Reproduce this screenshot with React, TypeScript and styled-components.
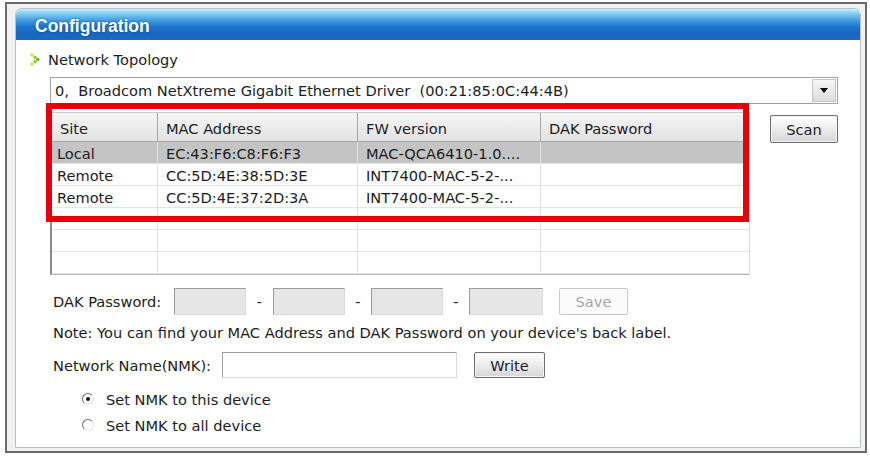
import React from "react";
import styled, { createGlobalStyle } from "styled-components";

const FONT = `"DejaVu Sans", Verdana, sans-serif`;

const Global = createGlobalStyle`
  html, body { margin: 0; padding: 0; background: #ffffff; }
  body { font-family: ${FONT}; font-size: 14.6px; color: #1c1c1c; }
  #root { width: 870px; height: 456px; overflow: hidden; }
`;

const Window = styled.div`
  box-sizing: border-box;
  margin: 2px 0 0 5px;
  width: 862px;
  height: 451px;
  border: 2px solid #6a6a6a;
  padding: 4px 4px 3px 8px;
  background: #f1f1f1;
`;

const Panel = styled.div`
  box-sizing: border-box;
  height: 100%;
  border: 1px solid #b8c0c8;
  border-radius: 7px 7px 0 0;
  background: #ffffff;
  display: flex;
  flex-direction: column;
  overflow: hidden;
`;

const TitleBar = styled.div`
  flex: none;
  height: 31px;
  box-sizing: border-box;
  padding: 3px 0 0 19px;
  display: flex;
  align-items: center;
  background: linear-gradient(
    to bottom,
    #c4ebfa 0%,
    #86d0f1 14%,
    #4aa3e3 34%,
    #1f78cf 55%,
    #1765bd 80%,
    #1c6bc3 100%
  );
  color: #ffffff;
  font: bold 17.5px "Liberation Sans", Arial, sans-serif;
  text-shadow: 0 0 2px rgba(10, 50, 110, 0.7);
`;

const Body = styled.div`
  flex: 1;
  padding: 9px 22px 0 14px;
  font-family: ${FONT};
  font-size: 14.6px;
  color: #1c1c1c;
`;

const Heading = styled.div`
  height: 20px;
  display: flex;
  align-items: center;
  gap: 8px;
`;

const Indent = styled.div`
  margin-left: 20px;
  display: flex;
  flex-direction: column;
`;

const Dropdown = styled.div`
  box-sizing: border-box;
  height: 27px;
  margin-top: 8px;
  border: 1px solid #a3a3a3;
  background: #ffffff;
  display: flex;
  align-items: center;
  padding: 0 1px 0 4px;
`;

const DropText = styled.span`
  flex: 1;
  white-space: pre;
`;

const DropButton = styled.div`
  box-sizing: border-box;
  width: 24px;
  height: 23px;
  border: 1px solid #c6c6c6;
  background: linear-gradient(#f7f7f7, #dcdcdc);
  display: flex;
  align-items: center;
  justify-content: center;
`;

const Caret = styled.span`
  width: 0;
  height: 0;
  border-left: 4px solid transparent;
  border-right: 4px solid transparent;
  border-top: 5px solid #000000;
`;

const TableArea = styled.div`
  display: flex;
  align-items: flex-start;
  margin-top: 8px;
`;

const Grid = styled.div`
  position: relative;
  box-sizing: border-box;
  width: 700px;
  border-left: 2px solid #8a8a8a;
  border-right: 1px solid #dadada;
  border-bottom: 1px solid #b8b8b8;
`;

const COLS = "106px 200px 183px 1fr";

const HeaderRow = styled.div`
  display: grid;
  grid-template-columns: ${COLS};
  height: 30px;
  box-sizing: border-box;
  border-top: 1px solid #cbcbcb;
  border-bottom: 1px solid #a8a8a8;
  background: linear-gradient(#f5f5f5, #e2e2e2);
`;

const HeadCell = styled.div`
  display: flex;
  align-items: center;
  padding: 3px 0 0 8px;
  border-right: 1px solid #a8a8a8;
  &:last-child { border-right: none; }
`;

const DataRow = styled.div<{ $selected?: boolean }>`
  display: grid;
  grid-template-columns: ${COLS};
  height: 22px;
  box-sizing: border-box;
  border-bottom: 1px solid #e4e4e4;
  background: ${(p) => (p.$selected ? "#c4c4c4" : "#ffffff")};
`;

const Cell = styled.div<{ $first?: boolean }>`
  display: flex;
  align-items: center;
  padding: 1px 0 0 ${(p) => (p.$first ? "5px" : "8px")};
  white-space: pre;
  overflow: hidden;
  border-right: 1px solid #e2e2e2;
  &:last-child { border-right: none; }
`;

const Highlight = styled.div`
  position: absolute;
  left: -6px;
  top: -9px;
  width: 703px;
  height: 119px;
  box-sizing: border-box;
  border: 6px solid #e5000e;
  pointer-events: none;
`;

const Button = styled.button<{ $disabled?: boolean; $w: number; $h: number; $top?: number }>`
  box-sizing: border-box;
  width: ${(p) => p.$w}px;
  height: ${(p) => p.$h}px;
  margin-top: ${(p) => p.$top ?? 0}px;
  padding: 0;
  font-family: ${FONT};
  font-size: 14.6px;
  border-radius: 2px;
  border: 1px solid ${(p) => (p.$disabled ? "#c9c9c9" : "#6e6e6e")};
  color: ${(p) => (p.$disabled ? "#a6a6a6" : "#1c1c1c")};
  background: ${(p) =>
    p.$disabled
      ? "#fbfbfb"
      : "linear-gradient(#ffffff 0%, #ececec 50%, #d6d6d6 100%)"};
  box-shadow: ${(p) => (p.$disabled ? "none" : "inset 0 0 0 1px #f4f4f4")};
`;

const ScanButton = styled(Button)`
  margin-left: auto;
`;

const FieldRow = styled.div<{ $top: number; $h: number }>`
  display: flex;
  align-items: center;
  margin-top: ${(p) => p.$top}px;
  height: ${(p) => p.$h}px;
  padding-left: 3px;
`;

const Label = styled.span<{ $w: number }>`
  width: ${(p) => p.$w}px;
  flex: none;
  white-space: pre;
`;

const Box = styled.div<{ $w: number; $disabled?: boolean }>`
  box-sizing: border-box;
  width: ${(p) => p.$w}px;
  height: 100%;
  border: 1px solid;
  border-color: ${(p) =>
    p.$disabled ? "#9a9a9a #d9d9d9 #d9d9d9 #9a9a9a" : "#a0a0a0 #dadada #dadada #a0a0a0"};
  background: ${(p) => (p.$disabled ? "#e6e6e6" : "#ffffff")};
`;

const Dash = styled.span<{ $w: number }>`
  width: ${(p) => p.$w}px;
  text-align: center;
  flex: none;
`;

const Note = styled.div`
  margin-top: 8px;
  height: 20px;
  line-height: 20px;
  padding-left: 3px;
  white-space: pre;
`;

const RadioGroup = styled.div`
  margin: 8px 0 0 32px;
  display: flex;
  flex-direction: column;
`;

const RadioRow = styled.label`
  height: 26px;
  display: flex;
  align-items: center;
  gap: 12px;
`;

const RadioCircle = styled.span<{ $checked?: boolean }>`
  box-sizing: border-box;
  width: 12px;
  height: 12px;
  border-radius: 50%;
  border: 1.5px solid;
  border-color: #6a6a6a #e2e2e2 #e2e2e2 #6a6a6a;
  background: #ffffff;
  display: flex;
  align-items: center;
  justify-content: center;
  &::after {
    content: "";
    width: 4px;
    height: 4px;
    border-radius: 50%;
    background: ${(p) => (p.$checked ? "#111111" : "transparent")};
  }
`;

const TopologyIcon = () => (
  <svg width="10" height="13" viewBox="0 0 10 13">
    <circle cx="2" cy="2" r="1.7" fill="#d8e23c" />
    <circle cx="5" cy="4.3" r="1.7" fill="#8cc63a" />
    <circle cx="7.8" cy="6.5" r="1.7" fill="#6fb232" />
    <circle cx="5" cy="8.7" r="1.7" fill="#8cc63a" />
    <circle cx="2" cy="11" r="1.7" fill="#d8e23c" />
  </svg>
);

const rows = [
  { site: "Local", mac: "EC:43:F6:C8:F6:F3", fw: "MAC-QCA6410-1.0....", dak: "", selected: true },
  { site: "Remote", mac: "CC:5D:4E:38:5D:3E", fw: "INT7400-MAC-5-2-...", dak: "" },
  { site: "Remote", mac: "CC:5D:4E:37:2D:3A", fw: "INT7400-MAC-5-2-...", dak: "" },
  { site: "", mac: "", fw: "", dak: "" },
  { site: "", mac: "", fw: "", dak: "" },
  { site: "", mac: "", fw: "", dak: "" },
];

export default function App() {
  return (
    <>
      <Global />
      <Window>
        <Panel>
          <TitleBar>Configuration</TitleBar>
          <Body>
            <Heading>
              <TopologyIcon />
              <span>Network Topology</span>
            </Heading>
            <Indent>
              <Dropdown>
                <DropText>{"0,  Broadcom NetXtreme Gigabit Ethernet Driver  (00:21:85:0C:44:4B)"}</DropText>
                <DropButton>
                  <Caret />
                </DropButton>
              </Dropdown>

              <TableArea>
                <Grid>
                  <HeaderRow>
                    <HeadCell>Site</HeadCell>
                    <HeadCell>MAC Address</HeadCell>
                    <HeadCell>FW version</HeadCell>
                    <HeadCell>DAK Password</HeadCell>
                  </HeaderRow>
                  {rows.map((r, i) => (
                    <DataRow key={i} $selected={r.selected}>
                      <Cell $first>{r.site}</Cell>
                      <Cell>{r.mac}</Cell>
                      <Cell>{r.fw}</Cell>
                      <Cell>{r.dak}</Cell>
                    </DataRow>
                  ))}
                  <Highlight />
                </Grid>
                <ScanButton $w={68} $h={28} $top={3}>Scan</ScanButton>
              </TableArea>

              <FieldRow $top={13} $h={27}>
                <Label $w={121}>DAK Password:</Label>
                <Box $w={72} $disabled />
                <Dash $w={27}>-</Dash>
                <Box $w={72} $disabled />
                <Dash $w={26}>-</Dash>
                <Box $w={72} $disabled />
                <Dash $w={26}>-</Dash>
                <Box $w={74} $disabled />
                <Button $w={69} $h={27} $disabled style={{ marginLeft: 16 }}>Save</Button>
              </FieldRow>

              <Note>Note: You can find your MAC Address and DAK Password on your device's back label.</Note>

              <FieldRow $top={9} $h={26}>
                <Label $w={169}>Network Name(NMK):</Label>
                <Box $w={235} />
                <Button $w={71} $h={26} style={{ marginLeft: 17 }}>Write</Button>
              </FieldRow>

              <RadioGroup>
                <RadioRow>
                  <RadioCircle $checked />
                  <span>Set NMK to this device</span>
                </RadioRow>
                <RadioRow>
                  <RadioCircle />
                  <span>Set NMK to all device</span>
                </RadioRow>
              </RadioGroup>
            </Indent>
          </Body>
        </Panel>
      </Window>
    </>
  );
}
